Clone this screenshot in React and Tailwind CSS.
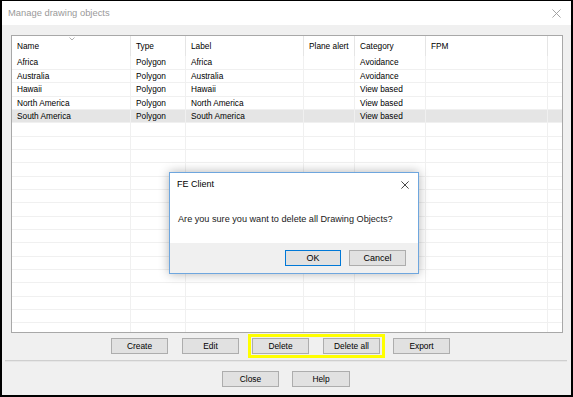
import React from 'react';

const columns = [
  { key: 'name', label: 'Name', width: 'w-[119px]' },
  { key: 'type', label: 'Type', width: 'w-[55px]' },
  { key: 'label', label: 'Label', width: 'w-[118px]' },
  { key: 'alert', label: 'Plane alert', width: 'w-[51px]' },
  { key: 'category', label: 'Category', width: 'w-[71px]' },
  { key: 'fpm', label: 'FPM', width: 'w-[122px]' },
];

const objects = [
  { name: 'Africa', type: 'Polygon', label: 'Africa', alert: '', category: 'Avoidance', fpm: '' },
  { name: 'Australia', type: 'Polygon', label: 'Australia', alert: '', category: 'Avoidance', fpm: '' },
  { name: 'Hawaii', type: 'Polygon', label: 'Hawaii', alert: '', category: 'View based', fpm: '' },
  { name: 'North America', type: 'Polygon', label: 'North America', alert: '', category: 'View based', fpm: '' },
  { name: 'South America', type: 'Polygon', label: 'South America', alert: '', category: 'View based', fpm: '' },
];

// pad the grid with empty rows like the real list view
const rows = [...objects, ...Array.from({ length: 16 }, () => null)];

const Button = ({ children, className = '' }) => (
  <button className={`w-[57px] h-[16px] bg-[#e1e1e1] border border-[#adadad] text-[8.4px] leading-none text-black ${className}`}>
    {children}
  </button>
);

const CloseIcon = ({ color, size }) => (
  <svg width={size} height={size} viewBox="0 0 10 10">
    <path d="M0.5 0.5 L9.5 9.5 M9.5 0.5 L0.5 9.5" stroke={color} strokeWidth="1" fill="none" />
  </svg>
);

const App = () => {
  return (
    <div className="relative w-[573px] h-[397px] flex flex-col bg-[#f0f0f0] border-t border-l-2 border-r-2 border-b-2 border-black font-['Liberation_Sans',Arial,sans-serif] overflow-hidden">
      {/* title bar */}
      <div className="h-[24px] shrink-0 bg-white flex items-center justify-between pl-[6px] pr-[10px]">
        <span className="text-[9.4px] text-[#9a9a9a]">Manage drawing objects</span>
        <CloseIcon color="#9a9a9a" size={9} />
      </div>

      {/* list view */}
      <div className="mt-[10px] ml-[9px] w-[552px] h-[298px] shrink-0 bg-white border border-[#a8a8a8] overflow-hidden">
        <div className="flex h-[20px]">
          {columns.map((col, i) => (
            <div key={col.key} className={`relative ${col.width} shrink-0 border-r border-[#e5e5e5] pl-[5px] flex items-center text-[8.3px] text-black`}>
              {i === 0 && (
                <svg className="absolute left-[57px] top-[1px]" width="6" height="4" viewBox="0 0 6 4">
                  <path d="M0.5 0.5 L3 3 L5.5 0.5" stroke="#9a9a9a" strokeWidth="0.8" fill="none" />
                </svg>
              )}
              {col.label}
            </div>
          ))}
          <div className="flex-1" />
        </div>
        {rows.map((row, i) => {
          const h = i === 0 ? 'h-[14px]' : (i - 1) % 3 === 1 ? 'h-[14px]' : 'h-[13px]';
          const selected = i === 4;
          return (
            <div key={i} className={`flex ${h} border-b border-[#f0f0f0] ${selected ? 'bg-[#e5e5e5]' : ''}`}>
              {columns.map((col) => (
                <div key={col.key} className={`${col.width} shrink-0 border-r border-[#f0f0f0] pl-[5px] flex items-center text-[8.3px] text-black whitespace-nowrap`}>
                  {row ? row[col.key] : ''}
                </div>
              ))}
              <div className={`flex-1 ${selected ? 'bg-[#e5e5e5]' : ''}`} />
            </div>
          );
        })}
      </div>

      {/* action buttons */}
      <div className="mt-[1px] h-[24px] shrink-0 flex items-center pl-[109px]">
        <Button>Create</Button>
        <Button className="ml-[14px]">Edit</Button>
        <div className="ml-[9px] h-[24px] flex items-center border-[3px] border-[#ffff00] pl-[1px] pr-[2px]">
          <Button>Delete</Button>
          <Button className="ml-[14px]">Delete all</Button>
        </div>
        <Button className="ml-[8px]">Export</Button>
      </div>

      <div className="mt-[2px] ml-[3px] w-[562px] h-[2px] shrink-0 bg-[#cfcfcf] border-b border-[#e6e6e6]" />

      <div className="mt-[9px] shrink-0 flex pl-[220px]">
        <Button>Close</Button>
        <Button className="ml-[13px] w-[58px]">Help</Button>
      </div>

      {/* confirmation dialog */}
      <div className="absolute left-[167px] top-[171px] w-[250px] h-[102px] flex flex-col bg-white border border-[#6ea6de] shadow-[0_0_10px_rgba(0,0,0,0.3)]">
        <div className="h-[23px] shrink-0 flex items-center justify-between pl-[7px] pr-[9px]">
          <span className="text-[9px] text-black">FE Client</span>
          <CloseIcon color="#1a1a1a" size={8} />
        </div>
        <div className="h-[47px] shrink-0 flex items-center pl-[8px] text-[9.15px] text-[#1a1a1a]">
          Are you sure you want to delete all Drawing Objects?
        </div>
        <div className="flex-1 bg-[#f0f0f0] flex justify-end items-start pt-[7px] pr-[12px]">
          <button className="w-[56px] h-[16px] bg-[#e1e1e1] border-[1.5px] border-[#0078d7] text-[9px] leading-none text-black">OK</button>
          <button className="ml-[8px] w-[57px] h-[16px] bg-[#e1e1e1] border border-[#adadad] text-[9px] leading-none text-black">Cancel</button>
        </div>
      </div>
    </div>
  );
};

export default App;
